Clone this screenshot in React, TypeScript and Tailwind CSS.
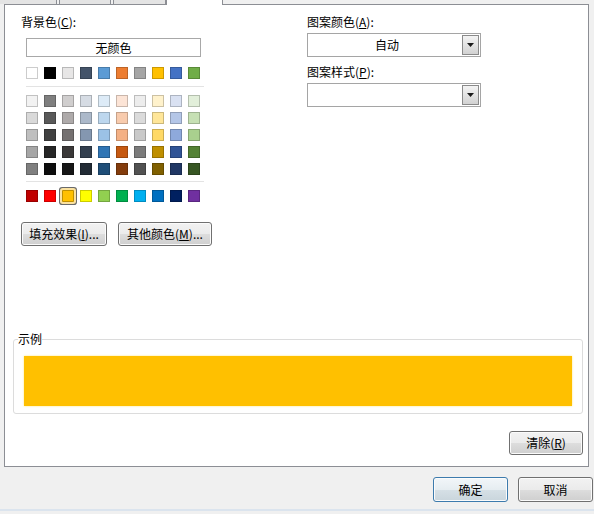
import React from "react";

const themeRow = ["#ffffff", "#000000", "#e7e6e6", "#44546a", "#5b9bd5", "#ed7d31", "#a5a5a5", "#ffc000", "#4472c4", "#70ad47"];

const tintRows = [
  ["#f2f2f2", "#7f7f7f", "#d0cece", "#d6dce4", "#ddebf7", "#fce4d6", "#ededed", "#fff2cc", "#d9e1f2", "#e2efda"],
  ["#d9d9d9", "#595959", "#aeaaaa", "#acb9ca", "#bdd7ee", "#f8cbad", "#dbdbdb", "#ffe699", "#b4c6e7", "#c6e0b4"],
  ["#bfbfbf", "#404040", "#757171", "#8497b0", "#9bc2e6", "#f4b084", "#c9c9c9", "#ffd966", "#8ea9db", "#a9d08e"],
  ["#a6a6a6", "#262626", "#3a3838", "#333f4f", "#2f75b5", "#c65911", "#7b7b7b", "#bf8f00", "#305496", "#548235"],
  ["#808080", "#0d0d0d", "#161616", "#222b35", "#1f4e78", "#833c0c", "#525252", "#806000", "#203764", "#375623"],
];

const standardRow = ["#c00000", "#ff0000", "#ffc000", "#ffff00", "#92d050", "#00b050", "#00b0f0", "#0070c0", "#002060", "#7030a0"];

const Swatch = ({ color, selected }: { color: string; selected?: boolean }) => (
  <div
    className={
      selected
        ? "w-[12px] h-[12px] border border-black/25 rounded-[1px] shadow-[0_0_0_2px_#fbe2a0,0_0_0_3px_#6a6a6a]"
        : "w-[12px] h-[12px] border border-black/20"
    }
    style={{ backgroundColor: color }}
  />
);

const SwatchRow = ({ colors, selectedIndex }: { colors: string[]; selectedIndex?: number }) => (
  <div className="flex gap-[6px]">
    {colors.map((c, i) => (
      <Swatch key={i} color={c} selected={i === selectedIndex} />
    ))}
  </div>
);

const WinButton = ({
  children,
  className = "",
  isDefault = false,
}: {
  children: React.ReactNode;
  className?: string;
  isDefault?: boolean;
}) => (
  <button
    className={
      (isDefault
        ? "border-[#3d7bad] bg-[linear-gradient(#f2f6f9_0%,#e6edf1_50%,#d6e0e6_51%,#c9d5dc_100%)] "
        : "border-[#707070] bg-[linear-gradient(#f2f2f2_0%,#ebebeb_50%,#dddddd_51%,#cfcfcf_100%)] ") +
      "flex items-center justify-center border rounded-[3px] shadow-[inset_0_0_0_1px_#fbfbfb] text-black " +
      className
    }
  >
    {children}
  </button>
);

const ComboBox = ({ value }: { value: string }) => (
  <div className="flex w-[174px] h-[24px] border border-[#a5a5a5] bg-white">
    <div className="flex-1 flex items-center justify-center pl-[4px]">{value}</div>
    <div className="w-[17px] my-[1px] mr-[1px] border border-[#8a8a8a] bg-[linear-gradient(#f3f3f3,#d2d2d2)] flex items-center justify-center">
      <svg width="7" height="4" viewBox="0 0 7 4">
        <path d="M0 0 H7 L3.5 4 Z" fill="#1a1a1a" />
      </svg>
    </div>
  </div>
);

export default function App() {
  return (
    <div className="w-[594px] h-[514px] bg-[#f0f0f0] overflow-hidden text-[12px] leading-[16px] text-black font-['Noto_Sans_CJK_SC',sans-serif]">
      {/* tabs strip */}
      <div className="flex h-[4px]">
        <div className="w-[57px] border-r border-[#8c8e94] bg-[#e4e4e4]" />
        <div className="ml-[2px] w-[52px] border-x border-[#8c8e94] bg-[#e4e4e4]" />
        <div className="ml-[2px] w-[53px] border-x border-[#8c8e94] bg-[#e4e4e4]" />
        <div className="relative z-10 w-[57px] h-[5px] border-x border-[#8c8e94] bg-white" />
      </div>

      {/* tab page */}
      <div className="ml-[4px] w-[585px] h-[463px] border border-[#8c8e94] bg-white flex flex-col">
        <div className="flex pl-[16px] pt-[9px]">
          {/* background color */}
          <div className="w-[286px]">
            <div>
              背景色(<u>C</u>):
            </div>
            <div className="ml-[5px] mt-[8px] w-[175px] h-[19px] border border-[#a8a8a8] flex items-center justify-center">
              无颜色
            </div>
            <div className="ml-[5px] mt-[10px]">
              <SwatchRow colors={themeRow} />
            </div>
            <div className="ml-[5px] mt-[7px] w-[178px] h-px bg-[#e3e3e3]" />
            <div className="ml-[5px] mt-[8px] flex flex-col gap-[5px]">
              {tintRows.map((row, i) => (
                <SwatchRow key={i} colors={row} />
              ))}
            </div>
            <div className="ml-[5px] mt-[6px] w-[178px] h-px bg-[#e3e3e3]" />
            <div className="ml-[5px] mt-[8px]">
              <SwatchRow colors={standardRow} selectedIndex={2} />
            </div>
            <div className="mt-[20px] flex gap-[11px]">
              <WinButton className="w-[86px] h-[24px]">
                填充效果(<u>I</u>)...
              </WinButton>
              <WinButton className="w-[94px] h-[24px]">
                其他颜色(<u>M</u>)...
              </WinButton>
            </div>
          </div>

          {/* pattern */}
          <div className="flex flex-col">
            <div>
              图案颜色(<u>A</u>):
            </div>
            <div className="mt-[3px]">
              <ComboBox value="自动" />
            </div>
            <div className="mt-[7px]">
              图案样式(<u>P</u>):
            </div>
            <div className="mt-[3px]">
              <ComboBox value="" />
            </div>
          </div>
        </div>

        {/* sample */}
        <fieldset className="ml-[8px] mt-[85px] w-[570px] border border-[#dcdcdc] rounded-[3px] px-[10px] pt-[9px] pb-[7px]">
          <legend className="-ml-[6px] px-0">示例</legend>
          <div className="h-[50px] bg-[#ffc000] shadow-[0_0_2px_#ffe680]" />
        </fieldset>

        <div className="mt-[17px] mr-[5px] flex justify-end">
          <WinButton className="w-[74px] h-[24px]">
            清除(<u>R</u>)
          </WinButton>
        </div>
      </div>

      {/* dialog buttons */}
      <div className="mt-[10px] mr-[1px] flex justify-end gap-[10px]">
        <WinButton isDefault className="w-[75px] h-[25px]">
          确定
        </WinButton>
        <WinButton className="w-[75px] h-[25px]">取消</WinButton>
      </div>
      <div className="mt-[7px] h-[2px] bg-[#dbe4ee]" />
    </div>
  );
}
